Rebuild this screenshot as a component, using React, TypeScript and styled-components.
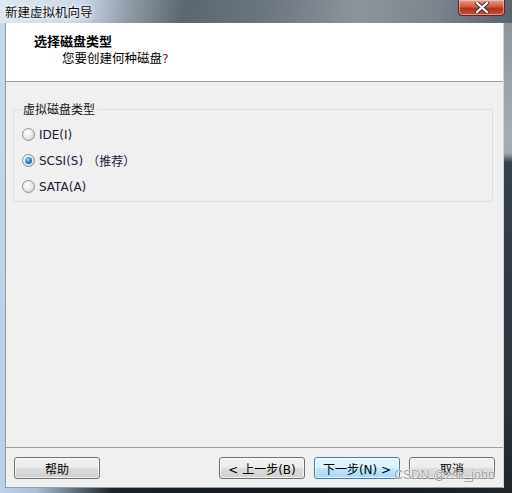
import React from "react";
import styled, { createGlobalStyle } from "styled-components";

const Global = createGlobalStyle`
  html, body { margin: 0; padding: 0; background: #1d2329; }
  body { width: 512px; height: 493px; overflow: hidden; }
  * { box-sizing: border-box; }
`;

const CJK = `"DejaVu Sans", "Noto Sans CJK SC", sans-serif`;

const Window = styled.div`
  position: relative;
  width: 512px;
  height: 493px;
  display: flex;
  flex-direction: column;
  font-family: ${CJK};
  font-size: 12px;
  color: #000;
`;

const TitleBar = styled.div`
  height: 23px;
  display: flex;
  align-items: flex-start;
  background: linear-gradient(
    100deg,
    #dde8f2 0%,
    #c9d8e6 16%,
    #8b97a3 26%,
    #5b6671 36%,
    #6c7680 52%,
    #8d959c 70%,
    #7b848c 85%,
    #59636d 100%
  );
`;

const TitleText = styled.div`
  padding: 4px 0 0 5px;
  font-family: "Noto Sans CJK SC", sans-serif;
  font-size: 12.5px;
  line-height: 15px;
  color: #0c0c0c;
  text-shadow: 0 0 6px #fff, 0 0 3px #fff;
  flex: 1;
`;

const CloseButton = styled.div`
  width: 47px;
  height: 16px;
  margin-right: 7px;
  border: 1px solid #5a2a22;
  border-top: none;
  border-radius: 0 0 4px 4px;
  background: linear-gradient(#e0a090 0%, #d0573e 45%, #b6301a 55%, #c8503a 100%);
  box-shadow: inset 0 0 0 1px rgba(255, 220, 200, 0.5);
  display: flex;
  align-items: center;
  justify-content: center;
`;

const Middle = styled.div`
  flex: 1;
  display: flex;
`;

const LeftFrame = styled.div`
  width: 6px;
  background: linear-gradient(#c8d9ea, #bcd2ea 60%, #b8d0ea);
  border-right: 1px solid #8d9aa8;
`;

const RightFrame = styled.div`
  width: 9px;
  border-left: 1px solid #d0d4d8;
  background: linear-gradient(#8e959b 0%, #a8adb1 25%, #a3a9ad 28%, #35414c 30%, #2b353e 80%, #1f262c 100%);
`;

const Client = styled.div`
  flex: 1;
  display: flex;
  flex-direction: column;
  background: #f0f0f0;
  border-bottom: 1px solid #8d9aa8;
`;

const Header = styled.div`
  height: 59px;
  background: #fff;
  border-bottom: 1px solid #a0a0a0;
  padding: 9px 0 0 28px;
`;

const HeaderTitle = styled.div`
  font-family: "Noto Sans CJK SC", sans-serif;
  font-weight: 700;
  font-size: 13px;
  line-height: 17px;
`;

const HeaderSub = styled.div`
  font-family: "Noto Sans CJK SC", sans-serif;
  font-size: 12.5px;
  line-height: 17px;
  margin-left: 28px;
`;

const Question = styled.span`
  color: #7a2424;
  font-family: "DejaVu Sans", sans-serif;
`;

const Body = styled.div`
  flex: 1;
  padding: 19px 10px 0 7px;
`;

const Group = styled.fieldset`
  margin: 0;
  height: 101px;
  border: 1px solid #d5dfe5;
  border-radius: 3px;
  padding: 9px 0 0 8px;
  display: flex;
  flex-direction: column;
  gap: 9px;
`;

const Legend = styled.legend`
  font-family: "Noto Sans CJK SC", sans-serif;
  font-size: 12px;
  line-height: 16px;
  padding: 0 2px 0 1px;
  margin-left: 0;
  color: #101010;
`;

const Option = styled.label`
  display: flex;
  align-items: center;
  height: 17px;
  gap: 3px;
  font-family: ${CJK};
  font-size: 12px;
  color: #1a1a3a;
`;

const RadioCircle = styled.span<{ $checked?: boolean }>`
  width: 13px;
  height: 13px;
  border-radius: 50%;
  border: 1px solid #8e8f8f;
  background: radial-gradient(circle at 40% 35%, #ffffff 0%, #ececec 45%, #c9c9c9 100%);
  display: flex;
  align-items: center;
  justify-content: center;
  margin-right: 1px;
  &::after {
    content: "";
    display: ${(p) => (p.$checked ? "block" : "none")};
    width: 7px;
    height: 7px;
    border-radius: 50%;
    background: radial-gradient(circle at 40% 35%, #9ee0ff 0%, #2c8ad8 45%, #0f3f7a 100%);
  }
`;

const Recommend = styled.span`
  font-family: "Noto Sans CJK SC", sans-serif;
  margin-left: 1px;
`;

const Footer = styled.div`
  height: 40px;
  border-top: 1px solid #a0a0a0;
  display: flex;
  align-items: flex-start;
  padding: 9px 8px 0 8px;
`;

const Spacer = styled.div`
  flex: 1;
`;

const Button = styled.div<{ $focused?: boolean; $gapLeft?: number }>`
  width: 86px;
  height: 22px;
  margin-left: ${(p) => p.$gapLeft ?? 0}px;
  border: 1px solid ${(p) => (p.$focused ? "#3c7fb1" : "#707070")};
  border-radius: 3px;
  background: ${(p) =>
    p.$focused
      ? "linear-gradient(#eaf6fd 0%, #d9f0fc 50%, #bee6fd 51%, #a7d9f5 100%)"
      : "linear-gradient(#f2f2f2 0%, #ebebeb 50%, #dddddd 51%, #cfcfcf 100%)"};
  box-shadow: inset 0 0 0 1px rgba(255, 255, 255, 0.7);
  display: flex;
  align-items: center;
  justify-content: center;
  font-family: ${CJK};
  font-size: 12px;
  color: #000;
`;

const BottomFrame = styled.div`
  height: 5px;
  background: linear-gradient(90deg, #bcd2ea 0%, #a9c0d8 7%, #1b2228 22%, #12171b 60%, #1f262c 100%);
`;

const Watermark = styled.div`
  position: absolute;
  left: 394px;
  top: 468px;
  font-family: "Liberation Sans", sans-serif;
  font-size: 12.5px;
  color: rgba(140, 140, 140, 0.85);
  text-shadow: 0 0 1px #fff, 0 0 2px #fff;
  pointer-events: none;
`;

const Radio = ({ checked, children }: { checked?: boolean; children: React.ReactNode }) => (
  <Option>
    <RadioCircle $checked={checked} />
    {children}
  </Option>
);

export default function App() {
  return (
    <>
      <Global />
      <Window>
        <TitleBar>
          <TitleText>新建虚拟机向导</TitleText>
          <CloseButton>
            <svg width="14" height="11" viewBox="0 0 14 11">
              <path
                d="M2 1 L12 10 M12 1 L2 10"
                stroke="#3a3a44"
                strokeWidth="4"
                strokeLinecap="round"
              />
              <path
                d="M2 1 L12 10 M12 1 L2 10"
                stroke="#ffffff"
                strokeWidth="2.2"
                strokeLinecap="round"
              />
            </svg>
          </CloseButton>
        </TitleBar>
        <Middle>
          <LeftFrame />
          <Client>
            <Header>
              <HeaderTitle>选择磁盘类型</HeaderTitle>
              <HeaderSub>
                您要创建何种磁盘<Question>?</Question>
              </HeaderSub>
            </Header>
            <Body>
              <Group>
                <Legend>虚拟磁盘类型</Legend>
                <Radio>IDE(I)</Radio>
                <Radio checked>
                  SCSI(S)<Recommend>（推荐）</Recommend>
                </Radio>
                <Radio>SATA(A)</Radio>
              </Group>
            </Body>
            <Footer>
              <Button>帮助</Button>
              <Spacer />
              <Button>&lt; 上一步(B)</Button>
              <Button $focused $gapLeft={9}>
                下一步(N) &gt;
              </Button>
              <Button $gapLeft={9}>取消</Button>
            </Footer>
          </Client>
          <RightFrame />
        </Middle>
        <BottomFrame />
        <Watermark>CSDN @zsk_john</Watermark>
      </Window>
    </>
  );
}
